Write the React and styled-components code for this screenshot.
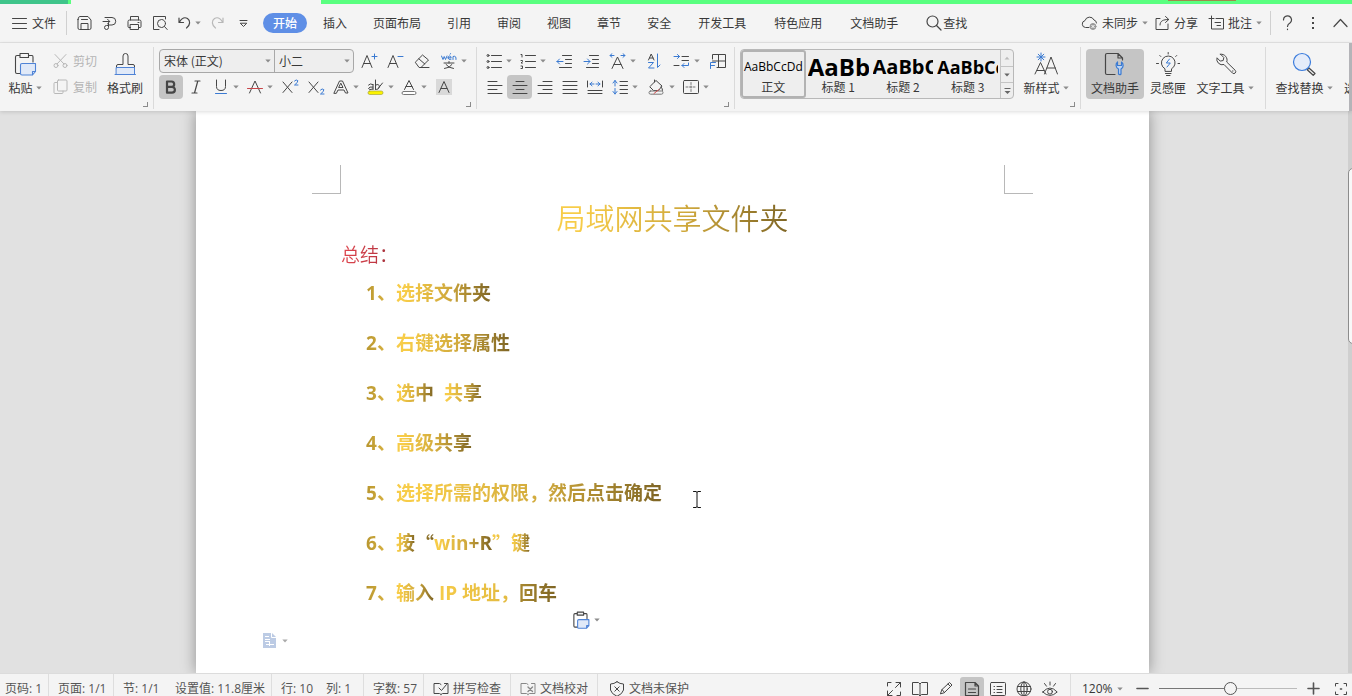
import React from "react";
import styled, { createGlobalStyle, css } from "styled-components";

const ui = '"Open Sans", "Noto Sans CJK SC", sans-serif';
const cjk = '"Noto Sans CJK SC", "Open Sans", sans-serif';

const GlobalStyle = createGlobalStyle`
  *, *::before, *::after { box-sizing: border-box; }
  body { margin: 0; background: #f4f4f4; color: #383838; font: 12px/20px ${cjk}; }
  button, select { font: inherit; color: inherit; border: 0; background: none; padding: 0; margin: 0; cursor: default; }
  svg { display: block; flex: none; }
`;

/* ---------- shell ---------- */

const Window = styled.div`
  display: flex;
  flex-direction: column;
  height: 100vh;
  overflow: hidden;
`;

const TabStrip = styled.div`
  display: flex;
  flex: none;
  height: 4px;
  background: #5aff80;
`;

const StripPart = styled.span`
  width: ${(p) => p.$w}px;
  background: ${(p) => p.$bg};
`;

const StripAlert = styled.span`
  width: 68px;
  height: 1px;
  margin-left: auto;
  margin-right: 116px;
  background: #a0884a;
`;

/* ---------- menu bar ---------- */

const MenuBar = styled.nav`
  display: flex;
  flex: none;
  align-items: center;
  height: 39px;
  padding: 0 4px 0 12px;
  border-bottom: 1px solid #e4e4e4;
  white-space: nowrap;
`;

const MenuButton = styled.button`
  display: flex;
  align-items: center;
  gap: ${(p) => p.$gap || 4}px;
  margin-left: ${(p) => p.$ml || 0}px;
  margin-right: ${(p) => p.$mr || 0}px;
`;

const MenuDivider = styled.span`
  width: 1px;
  height: 24px;
  margin: 0 ${(p) => p.$mr}px 0 ${(p) => p.$ml}px;
  background: #d0d0d0;
`;

const Tab = styled.button`
  height: 20px;
  padding: 0 ${(p) => (p.$wide ? 14 : 13)}px;
`;

const ActiveTab = styled.button`
  height: 20px;
  padding: 0 10px;
  margin-right: 3px;
  border-radius: 10px;
  background: #5f8fe6;
  color: #fff;
  font-weight: 500;
`;

const MenuEnd = styled.div`
  display: flex;
  align-items: center;
  margin-left: auto;
`;

/* ---------- ribbon ---------- */

const Ribbon = styled.div`
  position: relative;
  z-index: 1;
  display: flex;
  flex: none;
  height: 68px;
  background: #f4f4f4;
  box-shadow: 0 1px 4px rgba(0, 0, 0, 0.14);
  white-space: nowrap;
`;

const Group = styled.section`
  position: relative;
  display: flex;
  flex: ${(p) => (p.$grow ? "1 1 0" : "none")};
  min-width: 0;
  overflow: hidden;
  width: ${(p) => (p.$w ? p.$w + "px" : "auto")};
  padding: 6px 0 0 ${(p) => p.$pl || 0}px;

  &::after {
    content: "";
    display: ${(p) => (p.$grow ? "none" : "block")};
    position: absolute;
    right: 0;
    top: 4px;
    bottom: 2px;
    width: 1px;
    background: #dadada;
  }
`;

const Launcher = styled.button`
  position: absolute;
  right: 6px;
  bottom: 4px;
  width: 5px;
  height: 5px;
  border-right: 1px solid #8a8a8a;
  border-bottom: 1px solid #8a8a8a;
`;

const BigButton = styled.button`
  display: flex;
  flex: none;
  flex-direction: column;
  align-items: center;
  width: ${(p) => p.$w}px;
  height: 50px;
  padding-top: 3px;
  margin-right: ${(p) => p.$mr || 0}px;
  border-radius: 4px;
  background: ${(p) => (p.$on ? "#c5c5c5" : "transparent")};
`;

const BigLabel = styled.span`
  display: flex;
  align-items: center;
  gap: 3px;
  height: 20px;
  margin-top: 2px;
`;

const Rows = styled.div`
  display: flex;
  flex: none;
  flex-direction: column;
  gap: 2px;
  margin-right: ${(p) => p.$mr || 0}px;
`;

const Row = styled.div`
  display: flex;
  height: 24px;
`;

const SmallButton = styled.button`
  display: flex;
  align-items: center;
  gap: 5px;
  height: 24px;
  color: #b4b4b4;
`;

const Tool = styled.button`
  display: flex;
  align-items: center;
  justify-content: center;
  gap: 4px;
  width: ${(p) => p.$w}px;
  height: 24px;
  border-radius: 4px;
  background: ${(p) => (p.$on ? "#c5c5c5" : "transparent")};
`;

const Combos = styled.div`
  display: flex;
  height: 24px;
  margin-right: 2px;
  border: 1px solid #a8a8a8;
  border-radius: 4px;
  overflow: hidden;
  background: #eeeeee;
`;

const Combo = styled.label`
  display: grid;
  align-items: center;
  width: ${(p) => p.$w}px;

  & + & { border-left: 1px solid #a8a8a8; }
  & > * { grid-area: 1 / 1; }
  & > svg { justify-self: end; margin-right: 3px; pointer-events: none; }
`;

const ComboSelect = styled.select`
  appearance: none;
  width: 100%;
  height: 22px;
  padding: 0 14px 0 4px;
  outline: 0;
`;

/* ---------- style gallery ---------- */

const Gallery = styled.div`
  display: flex;
  width: 274px;
  height: 50px;
  margin-right: 4px;
  border: 1px solid #b8b8b8;
  border-radius: 4px;
  background: #eeeeee;
  overflow: hidden;
`;

const StyleCard = styled.button`
  flex: 1 1 0;
  min-width: 0;
  overflow: hidden;
  border: 2px solid ${(p) => (p.$on ? "#b2b2b2" : "transparent")};
  border-radius: 3px;
`;

const Preview = styled.span`
  display: flex;
  height: 25px;
  padding-top: 4px;
  align-items: center;
  justify-content: ${(p) => (p.$bold ? "flex-start" : "center")};
  overflow: hidden;
  color: #000;
  font-family: ${ui};
  font-size: ${(p) => p.$size}px;
  font-weight: ${(p) => (p.$bold ? 700 : 400)};
  line-height: 20px;
`;

const StyleName = styled.span`
  display: block;
  line-height: 20px;
`;

const Steps = styled.div`
  display: grid;
  grid-template-rows: repeat(3, 1fr);
  flex: none;
  width: 13px;
  border-left: 1px solid #c4c4c4;
`;

const Step = styled.button`
  display: flex;
  align-items: center;
  justify-content: center;
  & + & { border-top: 1px solid #c4c4c4; }
`;

const RibbonMore = styled.span`
  flex: none;
  width: 3px;
  background: #b4b4b8;
`;

/* ---------- document ---------- */

const Workspace = styled.main`
  display: flex;
  flex: 1 1 0;
  min-height: 0;
  background: #e1e1e1;
`;

const Canvas = styled.div`
  flex: 1;
  padding-right: 3px;
  overflow: hidden;
`;

const Page = styled.article`
  position: relative;
  width: 953px;
  max-width: 100%;
  min-height: 100%;
  margin: 0 auto;
  padding: 54px 116px 0;
  background: #fff;
  box-shadow: 0 0 14px rgba(0, 0, 0, 0.36);
`;

const Margins = styled.div`
  display: flex;
  justify-content: space-between;
`;

const Crop = styled.span`
  width: 29px;
  height: 29px;
  border-bottom: 1px solid #b8b8b8;
  ${(p) => (p.$right ? css`border-left: 1px solid #b8b8b8;` : css`border-right: 1px solid #b8b8b8;`)}
`;

const Body = styled.div`
  padding: 0 29px;
`;

const Title = styled.h1`
  margin: 0;
  text-align: center;
  font: 350 29px/46px ${cjk};
`;

const Summary = styled.h2`
  margin: 0;
  font: 350 19px/28px ${cjk};
`;

const Steplist = styled.ol`
  margin: 0;
  padding: 0 0 0 25px;
  list-style: none;
  font: 700 19px/50px ${ui};
`;

const Item = styled.li`
  display: flex;
  white-space: pre;
`;

const Ink = styled.span`
  background: ${(p) => p.$ink || "linear-gradient(90deg, #f7cc48 10%, #d0a93c 55%, #7d6424)"};
  -webkit-background-clip: text;
  background-clip: text;
  color: transparent;
  font-family: ${(p) => (p.$cjk ? cjk : "inherit")};
`;

const Num = styled(Ink)`
  width: 30px;
  white-space: nowrap;
`;

const Floating = styled.button`
  position: absolute;
  left: ${(p) => p.$x}px;
  top: ${(p) => p.$y}px;
  display: flex;
  align-items: center;
  gap: ${(p) => p.$gap || 4}px;
`;

const Rail = styled.div`
  flex: none;
  width: 4px;
  padding-top: 57px;
  background: #cfcfcf;
  overflow: hidden;
`;

const Thumb = styled.div`
  width: 12px;
  height: 176px;
  border: 1px solid #8c8c8c;
  border-radius: 5px;
  background: #f8f8f8;
`;

/* ---------- status bar ---------- */

const StatusBar = styled.footer`
  display: flex;
  flex: none;
  height: 23px;
  overflow: hidden;
  border-top: 1px solid #dcdcdc;
  color: #555;
  font-family: ${ui};
  white-space: nowrap;
`;

const Status = styled.button`
  display: flex;
  flex: none;
  align-items: center;
  gap: 4px;
  width: ${(p) => p.$w}px;
  height: 29px;
  padding-left: ${(p) => p.$pl || 9}px;
  border-right: 1px solid ${(p) => (p.$line ? "#dedede" : "transparent")};
`;

const StatusEnd = styled.div`
  display: flex;
  flex: none;
  align-items: center;
  height: 29px;
  margin-left: auto;
  padding-right: 4px;
`;

const View = styled.button`
  display: flex;
  flex: none;
  align-items: flex-start;
  justify-content: center;
  width: 24px;
  height: 24px;
  padding-top: 4px;
  margin-right: 2px;
  border-radius: 3px;
  background: ${(p) => (p.$on ? "#c5c5c5" : "transparent")};
`;

const Zoom = styled.button`
  display: flex;
  align-items: center;
  gap: 4px;
  width: 66px;
  height: 29px;
  margin-left: 6px;
  padding-left: 11px;
  border-left: 1px solid #dedede;
  color: #383838;
`;

const Slider = styled.input`
  appearance: none;
  width: 138px;
  height: 14px;
  margin: 0 10px;
  background: linear-gradient(#777, #777) left center / 50% 1px no-repeat,
    linear-gradient(#bbb, #bbb) right center / 50% 1px no-repeat;

  &::-webkit-slider-thumb {
    appearance: none;
    width: 13px;
    height: 13px;
    border: 1px solid #555;
    border-radius: 50%;
    background: #f4f4f4;
  }
`;

/* ---------- icons ---------- */

const K = "#464646";
const B = "#3a7ad2";

const Svg = ({ w = 16, h = 16, vb, c = K, sw = 1, children }) => (
  <svg width={w} height={h} viewBox={vb || `0 0 ${w} ${h}`} fill="none" stroke={c} strokeWidth={sw} strokeLinecap="round" strokeLinejoin="round" aria-hidden="true">
    {children}
  </svg>
);

const Caret = ({ c = "#8c8c8c", up }) => (
  <svg width="6" height="4" viewBox="0 0 6 4" aria-hidden="true">
    <path d={up ? "M.5 3.500 3 .8l2.500 2.700z" : "M.3.5h5.400L3 3.400z"} fill={c} />
  </svg>
);

const Burger = () => <Svg w={15}><path d="M.5 3.500h14M.5 8.500h14M.5 13.500h14" /></Svg>;
const Save = () => (
  <Svg w={15}><path d="M1 4.500V13q0 1.500 1.500 1.500h10Q14 14.500 14 13V5l-3-3.500H3Q1 1.500 1 4.500z" /><path d="M4 14.500V8.500h7v6M4.500 4.500h6" /></Svg>
);
const Export = () => (
  <Svg w={15}><path d="M3 2.500h7a3.700 3.700 0 0 1 0 7.500H6.500v2.500a2 2 0 1 1-2-2h2V8M1 6.500h6.500M5.500 4.200 7.800 6.500 5.500 8.800" /></Svg>
);
const Print = () => (
  <Svg w={15}><path d="M3.500 5V1.500h8V5M3.500 12.500H2Q1 12.500 1 11.500V6.500Q1 5 2.500 5h10Q14 5 14 6.500v5q0 1-1 1h-1.500M3.500 9.500h8v5h-8zM11 7.500h1" /></Svg>
);
const PrintView = () => (
  <Svg w={16}><path d="M7 14.500H1.500v-13h12V4" /><circle cx="9.500" cy="8.500" r="4" /><path d="m12.500 11.500 2.700 3" /></Svg>
);
const Undo = ({ c, flip }) => (
  <Svg w={13} c={c} sw={1.200}><g transform={flip ? "matrix(-1 0 0 1 13 0)" : undefined}><path d="M1 3v4.500h4.500M1.500 7C4 2.500 7 2 9.500 3.500c3 2 3 6.500-1 9.500" /></g></Svg>
);
const Customize = () => <Svg w={9} h={10}><path d="M1 2.500h7M1.500 5.500l3 3 3-3z" /></Svg>;
const Expand = () => (
  <svg width="7" height="8" viewBox="0 0 7 8" aria-hidden="true"><path d="M.5 1.500h6" stroke="#666" /><path d="M.5 4h6L3.500 7z" fill="#666" /></svg>
);
const Search = () => <Svg sw={1.200}><circle cx="6.500" cy="6.500" r="5.500" /><path d="m10.500 10.500 4.500 4.500" /></Svg>;
const Cloud = () => (
  <Svg w={17}><path d="M8 12.500H4.500A3.500 3.500 0 0 1 4 5.600 4.800 4.800 0 0 1 13 5q2.500.7 2.500 3" /><circle cx="12" cy="11.500" r="3" fill="#999" stroke="#999" /><path d="m10.800 10.300 2.400 2.400m0-2.400-2.400 2.400" stroke="#fff" /></Svg>
);
const Share = () => (
  <Svg w={15}><path d="M5 3.500H1v11h12V9M5 10C5 6 8 4.500 13.500 4.500M10.500 1.500l3.300 3-3.300 3" /></Svg>
);
const Comment = () => (
  <Svg w={16}><path d="M3.500 6v8h12V3.500H8M3.500 1v5M1 3.500h5M7 7.500h5.500M9 10.500h3.500" /></Svg>
);
const Help = () => <Svg w={11} sw={1.200}><path d="M1.500 5a4 4 0 1 1 6.700 2.800Q5.500 9.500 5.500 11.500M5.500 14v.6" /></Svg>;
const Dots = () => <svg width="4" height="16" viewBox="0 0 4 16" aria-hidden="true"><g fill={K}><rect x="1" y="2" width="2" height="2" /><rect x="1" y="7" width="2" height="2" /><rect x="1" y="12" width="2" height="2" /></g></svg>;
const Collapse = () => <Svg w={15} sw={1.200}><path d="m1 11.500 6.500-7 6.500 7" /></Svg>;

const Paste = ({ s = 24 }) => (
  <Svg w={s} h={s} vb="0 0 24 24" sw={24 / s * 1.100}>
    <path d="M8 21.500H4Q2.500 21.500 2.500 20V5Q2.500 3.500 4 3.500H19Q20 3.500 20 5v5" />
    <path d="M7 1.500h8.500v4H7z" fill="#f4f4f4" />
    <path d="M9 11.500h13.500v8l-3 3.500H9Q7.500 23 7.500 21.500v-8.500Q7.500 11.500 9 11.500zM19.500 23v-3.500h3" stroke="#4f83d6" fill="#e0e9f8" />
  </Svg>
);
const Cut = () => (
  <Svg w={15} c="#b8b8b8"><path d="m2 1.500 9 9.500M13 1.500 4 11" /><circle cx="3" cy="12.500" r="2" /><circle cx="12" cy="12.500" r="2" /></Svg>
);
const Copy = () => (
  <Svg w={15} c="#b8b8b8"><path d="M4.500 3.500H2Q1 3.500 1 4.500v9q0 1 1 1h7q1 0 1-1V12" /><rect x="4.500" y="1" width="9.500" height="11" rx="1" /></Svg>
);
const Brush = () => (
  <Svg w={24} h={24}>
    <path d="M3.500 16v-2q0-1.500 1.500-1.500h5V4a2.500 2.500 0 0 1 5 0v8.500h5q1.500 0 1.500 1.500v2" />
    <path d="M2 22.500h20.500M3.500 15.500h18v7h-18z" stroke="#4f83d6" fill="#e0e9f8" />
  </Svg>
);
const Grow = ({ minus }) => (
  <Svg w={17}><path d="M1 14.500 6 2.500l5 12M2.800 10.500h6.400" /><path d={minus ? "M11 3.500h5" : "M11 3.500h5M13.500 1v5"} stroke={B} /></Svg>
);
const Eraser = () => (
  <Svg><path d="m1.500 9 7-7 6 5-7.500 7.500H5.500zM4.800 5.800l6 5.200M7 14.500h8" /></Svg>
);
const Pinyin = () => (
  <Svg w={16}><g stroke={B}><path d="M.5 3 2 6.500 3.200 3.500 4.500 6.500 6 3M7 4.800h3.200Q10 3 8.500 3 7 3.200 7 5q.3 2 3 1.300M9 1.200l.8-.7M12 6.500V3.500q3.500-1.200 3 3" /></g><path d="M3 10h10M8 8.500V10M5 11.500Q7.500 15 12.500 15.500M11 11.500Q9 15 3.500 15.500" /></Svg>
);
const Bold = () => <Svg sw={2.200}><path d="M4 2.500h4.500a2.700 2.700 0 0 1 0 5.400H4zM4 7.900h5a2.900 2.900 0 0 1 0 5.800H4z" /></Svg>;
const Italic = () => <Svg sw={1.200}><path d="M7 2h5M4 14h5M9.800 2 6.500 14" /></Svg>;
const Underline = () => <Svg><path d="M3.500 1v6.500q0 4 4.500 4t4.500-4V1" /><path d="M2.500 14.500h11" stroke={B} /></Svg>;
const Strike = () => <Svg><path d="M2.500 14 8 2l5.500 12" /><path d="M.5 9.500h15" stroke="#c8464a" /></Svg>;
const Script = ({ sub }) => (
  <Svg w={17}><path d="m1 3 9 10.500M10 3 1 13.500" /><path d={sub ? "M12.500 11q1.800-2 3.300-.4.500 1.700-3.300 4.400H16" : "M12.500 2q1.800-2 3.300-.4.500 1.700-3.300 4.400H16"} stroke={B} /></Svg>
);
const Effect = () => <Svg><path d="M1 14 6.500 2h3L15 14h-2.500l-1.500-3H5l-1.500 3zM6 8.500h4L8 4.500z" /></Svg>;
const Highlight = () => (
  <Svg w={17}><path d="M6 5.500Q3 4 1.500 6M6 10.500v-5M6 8q-4-.5-4.500 1.500Q2 11.500 6 10M8.500 1v9.500M8.500 6q3-1.500 4 .8-.5 4.500-4 3.500M15.500 4l-4 5" /><rect x="1" y="12" width="15" height="3.500" rx="1.700" fill="#fbf200" stroke="#9a9a30" strokeWidth=".6" /></Svg>
);
const FontColor = () => <Svg><path d="M3.500 10.500 8 1.500l4.500 9M5 7.500h6" /><rect x="1" y="12.500" width="14" height="3" rx="1.500" stroke="#777" fill="#fff" /></Svg>;
const Shade = () => <Svg><rect x="0" y="0" width="16" height="16" fill="#d9d9d9" stroke="none" /><path d="M3 13.500 8 2.500l5 11M5 9.500h6" /></Svg>;

const Bullets = ({ num }) => (
  <Svg><path d="M5.500 2.500h10M5.500 8.500h10M5.500 14.500h10" />{num ? <path d="M1 1.500h1v2.500M1 7.500h1.500v1L1 10h1.500M1 13h1.500v2.500H1" /> : <g><circle cx="2" cy="2.500" r="1" /><circle cx="2" cy="8.500" r="1" /><circle cx="2" cy="14.500" r="1" /></g>}</Svg>
);
const Indent = ({ out }) => (
  <Svg><path d="M6.500 2.500h9M9.500 6.500h6M9.500 10.500h6M3.500 14.500h12" /><path d={out ? "M1 8.500h6M3.500 6 1 8.500 3.500 11" : "M1 8.500h6M4.500 6 7 8.500 4.500 11"} stroke={B} /></Svg>
);
const CharWidth = () => (
  <Svg w={17}><path d="M3 15.500 8.500 4 14 15.500M5 11.500h7" /><path d="M1 2.500h4M3 .7 1 2.500l2 1.800M16 2.500h-4M14 .7l2 1.800-2 1.800" stroke={B} /></Svg>
);
const Sort = () => (
  <Svg w={14}><path d="m1.500 7 2.700-6 2.800 6M2.500 5h3.500" /><path d="M1.500 9.500h5l-5 5.500h5.500M10.500 1v13.500l2.500-2.500" stroke={B} /></Svg>
);
const Tabs = () => (
  <Svg w={17}><path d="M9 3.500h6.500M9 7.500h6.500M1 12.500h5" /><path d="M1 3.500h5.500M4.500 1.500l2 2-2 2M15.500 10v2.500H9M11 10.500 9 12.500l2 2" stroke={B} /></Svg>
);
const LayoutGrid = () => (
  <Svg w={17}><path d="M3.500 6V1.500h13v13H8M9.500 1.500v13M3.500 8h13" /><path d="M1.500 15.500V9.500h5M1.500 12.500h4" stroke={B} /></Svg>
);
const Align = ({ d }) => <Svg><path d={d} /></Svg>;
const Distribute = () => <Svg><path d="M.5 2v6M15.500 2v6M1 11.500h14M1 14.500h14" /><path d="M3 5h4M5 3.200 3 5l2 1.800M13 5H9M11 3.200 13 5l-2 1.800" stroke={B} /></Svg>;
const Spacing = () => <Svg><path d="M8 2.500h7.500M8 6.500h7.500M8 10.500h7.500M8 14.500h7.500" /><path d="M3 1.500v5.500M3 9.500v5.500M1 4l2-2.500L5 4M1 12.500l2 2.500 2-2.500" stroke={B} /></Svg>;
const Bucket = () => <Svg w={17}><path d="M3 6.500 8 1.500l6 5.500-3.500 4.500h-5L2 8zM6.500 3V1M13 8q2 2 1.500 3.500" /><rect x="1" y="12" width="14" height="3.200" rx="1.600" stroke="#777" /><path d="m6 14.500 5-4" stroke="#d25050" /></Svg>;
const Borders = () => <Svg><rect x=".5" y="1.500" width="15" height="13" rx="1" /><path d="M8 3.500v9.500M3 8h10" strokeDasharray="2 1.500" stroke="#777" /></Svg>;

const NewStyle = () => (
  <Svg w={24} h={24}><path d="M1 22 6.500 10.500 12 22M3 18.500h7M10.500 22 17 5l6.500 17M13 16h8.500" /><path d="M7 1v8M3 5h8M4.200 2.200l5.600 5.600M9.800 2.200 4.200 7.800" stroke={B} /></Svg>
);
const DocHelper = () => (
  <Svg w={24} h={24} sw={1.200}><path d="M12 22.500H4q-1.500 0-1.500-1.500V3Q2.500 1.500 4 1.500h11l4.500 4.500v2M15 1.500V6h4.500" /><path d="M15.500 22v-5a4.200 4.200 0 0 1-1-7v3.500h4V10a4.200 4.200 0 0 1-.5 7v5q-1.200 1.300-2.500 0z" stroke={B} fill="#bcd4f4" /></Svg>
);
const Idea = () => (
  <Svg w={24} h={24}><path d="M9 19v-2.200a6.800 6.800 0 1 1 6.500 0V19zM9.500 21.500h5.500M10.500 23.500h3.500M12.200 2V.5M4.800 4.500l-1-1M19.700 4.500l1-1M2.500 11.500h-2M22 11.500h2" /><path d="m13.500 7-3.200 4h4l-3.300 4" stroke={B} /></Svg>
);
const Wrench = () => (
  <Svg w={24} h={24}><path d="M7.500 2.200 10.800 5.500l-.6 3-3 .6L4 5.800a5.500 5.500 0 0 0 7 6.700l8.500 8.600q1.500 1.200 2.700-.1 1.200-1.400 0-2.700l-8.500-8.300a5.800 5.800 0 0 0-6.200-7.800z" /><path d="M19.500 19h.5" /></Svg>
);
const FindBig = () => (
  <Svg w={24} h={24} sw={1.200}><path d="m17 16 6 5.500-1.800 1.800-6-5.500z" /><circle cx="10" cy="10" r="8.500" stroke="#3b7cdc" fill="#e4ecfa" /></Svg>
);
const DocTag = () => (
  <svg width="13" height="15" viewBox="0 0 13 15" aria-hidden="true"><path d="M0 0h9l4 4v11H0z" fill="#bccbe4" /><path d="M8.500 0v4.500H13M2 3.500h4M2 6.500h5M2 8.500h5M3 11.500h8M6.500 9v4" stroke="#fff" fill="none" /></svg>
);
const IBeam = () => <Svg w={8} h={17} c="#111"><path d="M.5.5h2.500l1 .8L5 .5h2.500M4 1.500v14M.5 16.500h2.500l1-.8 1 .8h2.500" /></Svg>;

const BookMark = ({ x, c }) => (
  <Svg w={16} h={14} c={c}><path d="M8 12.500 6.500 11.500H1v-10h5.500L8 2.500M8 12.500l1.500-1H15v-10h-3.500" />{x ? <path d="m8 5 4.500 4.500M12.500 5 8 9.500" strokeWidth="1.400" /> : <path d="m6 6 2.500 2.500 5-6" />}</Svg>
);
const Shield = () => <Svg><path d="M8 .8Q11 3 14.500 3v6Q13.500 13 8 15.300 2.500 13 1.500 9V3Q5 3 8 .8z" /><path d="m5.800 5.800 4.400 4.400M10.200 5.800l-4.400 4.400" /></Svg>;
const Full = () => <Svg><path d="M10 1.500h4.500V6M14.500 1.500 9.500 6.500M6 14.500H1.500V10M1.500 14.500l5-5M1.500 5V1.500H5M14.500 11v3.500H11" /></Svg>;
const Read = () => <Svg><path d="M8 3v12L6.500 13.500h-6v-12h6L8 3l1.500-1.500h6v12h-6L8 15" /></Svg>;
const Pen = () => <Svg><path d="M2.500 12.500 4 8.500 11.500 1.500 14 4l-7.500 7.500zM4 8.500l2.500 3M10 3l2.500 2.500M1 15.500h13.500" /></Svg>;
const DocView = () => <Svg sw={1.200}><path d="M1.500 1.500h9.500l3.500 3.500v9.500h-13zM11 1.500V5h3.500M4.500 8h7M4.500 11.500h7" /></Svg>;
const Outline = () => <Svg><rect x=".5" y="1.500" width="15" height="13" rx="1" /><path d="M4 5.500h.5M7 5.500h5M4 8.500h.5M7 8.500h5M4 11.500h.5M7 11.500h5" /></Svg>;
const Globe = () => <Svg><circle cx="8" cy="8" r="7" /><ellipse cx="8" cy="8" rx="3.200" ry="7" /><path d="M1.500 5.500h13M1.500 10.500h13M8 1v14" /></Svg>;
const Eye = () => <Svg><path d="M.8 11Q8 3 15.200 11 8 18 .8 11zM8 1v3M2.500 2.500l2 2.700M13.500 2.500l-2 2.700" /><circle cx="8" cy="10.700" r="2.400" /></Svg>;
const Focus = () => <Svg w={14} h={14}><path d="M1.500 4V1.500H4M10 1.500h2.500V4M12.500 10v2.500H10M4 12.500H1.500V10" /><path d="M6.500 7h1" strokeWidth="1.600" /></Svg>;
const Sign = ({ plus }) => <Svg w={13} h={13} sw={1.600} c="#555"><path d={plus ? "M1 6.500h11M6.500 1v11" : "M1 6.500h11"} /></Svg>;

/* ---------- data ---------- */

const tabs = [
  ["插入"], ["页面布局"], ["引用"], ["审阅"], ["视图"], ["章节"], ["安全"],
  ["开发工具", true], ["特色应用", true], ["文档助手", true],
];

const styles = [
  { name: "正文", sample: "AaBbCcDd", size: 12, on: true },
  { name: "标题 1", sample: "AaBb", size: 24, bold: true },
  { name: "标题 2", sample: "AaBbC", size: 20, bold: true },
  { name: "标题 3", sample: "AaBbCc", size: 18, bold: true },
];

const gold = "linear-gradient(90deg, #f7cc48, #e0b840)";
const mid = "linear-gradient(90deg, #b8962f, #e8c04a)";
const dark = "linear-gradient(90deg, #a98930, #7d6424)";
const red = "linear-gradient(90deg, #e0464e, #c03844 60%, #8c3038)";

const lines = [
  [{ t: "选择文件夹" }],
  [{ t: "右键选择属性" }],
  [{ t: "选中" }, { t: "  " }, { t: "共享" }],
  [{ t: "高级共享" }],
  [{ t: "选择所需的权限，然后点击确定" }],
  [{ t: "按" }, { t: "“", ink: dark, cjk: true }, { t: "win+R" }, { t: "”", ink: gold, cjk: true }, { t: "键" }],
  [{ t: "输入" }, { t: " IP 地址，", ink: gold }, { t: "回车", ink: dark }],
];

const ToolButton = ({ w, label, menu, on, children }) => (
  <Tool $w={w} $on={on} aria-label={label} aria-pressed={on}>
    {children}
    {menu && <Caret />}
  </Tool>
);

/* ---------- sections ---------- */

const TopMenu = () => (
  <MenuBar>
    <MenuButton $gap={5}><Burger />文件</MenuButton>
    <MenuDivider $ml={10} $mr={10} />
    <MenuButton $mr={10} aria-label="保存"><Save /></MenuButton>
    <MenuButton $mr={10} aria-label="输出"><Export /></MenuButton>
    <MenuButton $mr={10} aria-label="打印"><Print /></MenuButton>
    <MenuButton $mr={10} aria-label="打印预览"><PrintView /></MenuButton>
    <MenuButton $mr={10} aria-label="撤销"><Undo /><Caret /></MenuButton>
    <MenuButton $mr={15} aria-label="恢复"><Undo flip c="#b8b8b8" /></MenuButton>
    <MenuButton $mr={15} aria-label="自定义"><Customize /></MenuButton>
    <ActiveTab>开始</ActiveTab>
    {tabs.map(([t, wide]) => <Tab key={t} $wide={wide}>{t}</Tab>)}
    <MenuButton $gap={1} $ml={14}><Search />查找</MenuButton>
    <MenuEnd>
      <MenuButton $mr={7}><Cloud />未同步<Caret /></MenuButton>
      <MenuButton $mr={10}><Share />分享</MenuButton>
      <MenuButton><Comment />批注<Caret /></MenuButton>
      <MenuDivider $ml={8} $mr={11} />
      <MenuButton $mr={18} aria-label="帮助"><Help /></MenuButton>
      <MenuButton $mr={18} aria-label="更多"><Dots /></MenuButton>
      <MenuButton aria-label="收起"><Collapse /></MenuButton>
    </MenuEnd>
  </MenuBar>
);

const HomeRibbon = () => (
  <Ribbon>
    <Group $w={154} $pl={5}>
      <BigButton $w={40} $mr={8}><Paste /><BigLabel>粘贴<Caret /></BigLabel></BigButton>
      <Rows $mr={6}>
        <SmallButton><Cut />剪切</SmallButton>
        <SmallButton><Copy />复制</SmallButton>
      </Rows>
      <BigButton $w={44}><Brush /><BigLabel>格式刷</BigLabel></BigButton>
      <Launcher aria-label="剪贴板设置" />
    </Group>

    <Group $w={323} $pl={5}>
      <Rows>
        <Row>
          <Combos>
            <Combo $w={114}><ComboSelect aria-label="字体"><option>宋体 (正文)</option></ComboSelect><Caret /></Combo>
            <Combo $w={79}><ComboSelect aria-label="字号"><option>小二</option></ComboSelect><Caret /></Combo>
          </Combos>
          <ToolButton w={26} label="增大字号"><Grow /></ToolButton>
          <ToolButton w={26} label="减小字号"><Grow minus /></ToolButton>
          <ToolButton w={28} label="清除格式"><Eraser /></ToolButton>
          <ToolButton w={36} label="拼音指南" menu><Pinyin /></ToolButton>
        </Row>
        <Row>
          <ToolButton w={24} label="加粗" on><Bold /></ToolButton>
          <ToolButton w={26} label="倾斜"><Italic /></ToolButton>
          <ToolButton w={34} label="下划线" menu><Underline /></ToolButton>
          <ToolButton w={34} label="删除线" menu><Strike /></ToolButton>
          <ToolButton w={26} label="上标"><Script /></ToolButton>
          <ToolButton w={26} label="下标"><Script sub /></ToolButton>
          <ToolButton w={34} label="文字效果" menu><Effect /></ToolButton>
          <ToolButton w={34} label="突出显示" menu><Highlight /></ToolButton>
          <ToolButton w={34} label="字体颜色" menu><FontColor /></ToolButton>
          <ToolButton w={26} label="字符底纹"><Shade /></ToolButton>
        </Row>
      </Rows>
      <Launcher aria-label="字体设置" />
    </Group>

    <Group $w={258} $pl={5}>
      <Rows>
        <Row>
          <ToolButton w={34} label="项目符号" menu><Bullets /></ToolButton>
          <ToolButton w={34} label="编号" menu><Bullets num /></ToolButton>
          <ToolButton w={28} label="减少缩进"><Indent out /></ToolButton>
          <ToolButton w={26} label="增加缩进"><Indent /></ToolButton>
          <ToolButton w={36} label="中文版式" menu><CharWidth /></ToolButton>
          <ToolButton w={28} label="排序"><Sort /></ToolButton>
          <ToolButton w={36} label="制表位" menu><Tabs /></ToolButton>
          <ToolButton w={26} label="布局"><LayoutGrid /></ToolButton>
        </Row>
        <Row>
          <ToolButton w={25} label="左对齐"><Align d="M1 2.500h9M1 6.500h14M1 10.500h9M1 14.500h14" /></ToolButton>
          <ToolButton w={25} label="居中" on><Align d="M4 2.500h8M1 6.500h14M4 10.500h8M1 14.500h14" /></ToolButton>
          <ToolButton w={25} label="右对齐"><Align d="M6 2.500h9M1 6.500h14M6 10.500h9M1 14.500h14" /></ToolButton>
          <ToolButton w={25} label="两端对齐"><Align d="M1 2.500h14M1 6.500h14M1 10.500h14M1 14.500h14" /></ToolButton>
          <ToolButton w={25} label="分散对齐"><Distribute /></ToolButton>
          <ToolButton w={36} label="行距" menu><Spacing /></ToolButton>
          <ToolButton w={36} label="底纹颜色" menu><Bucket /></ToolButton>
          <ToolButton w={34} label="边框" menu><Borders /></ToolButton>
        </Row>
      </Rows>
      <Launcher aria-label="段落设置" />
    </Group>

    <Group $w={346} $pl={5}>
      <Gallery>
        {styles.map((s) => (
          <StyleCard key={s.name} $on={s.on}>
            <Preview $size={s.size} $bold={s.bold}>{s.sample}</Preview>
            <StyleName>{s.name}</StyleName>
          </StyleCard>
        ))}
        <Steps>
          <Step aria-label="上一行"><Caret up c="#bbb" /></Step>
          <Step aria-label="下一行"><Caret c="#666" /></Step>
          <Step aria-label="展开"><Expand /></Step>
        </Steps>
      </Gallery>
      <BigButton $w={56}><NewStyle /><BigLabel>新样式<Caret /></BigLabel></BigButton>
      <Launcher aria-label="样式设置" />
    </Group>

    <Group $w={185} $pl={5}>
      <BigButton $w={58} $mr={2} $on><DocHelper /><BigLabel>文档助手</BigLabel></BigButton>
      <BigButton $w={44} $mr={2}><Idea /><BigLabel>灵感匣</BigLabel></BigButton>
      <BigButton $w={66}><Wrench /><BigLabel>文字工具<Caret /></BigLabel></BigButton>
    </Group>

    <Group $grow $pl={5}>
      <BigButton $w={66} $mr={4}><FindBig /><BigLabel>查找替换<Caret /></BigLabel></BigButton>
      <BigButton $w={30}><Svg w={24} h={24} /><BigLabel>选择</BigLabel></BigButton>
    </Group>
    <RibbonMore />
  </Ribbon>
);

const Document = () => (
  <Workspace>
    <Canvas>
      <Page>
        <Margins><Crop /><Crop $right /></Margins>
        <Body>
          <Title><Ink>局域网共享文件夹</Ink></Title>
          <Summary><Ink $ink={red}>总结：</Ink></Summary>
          <Steplist>
            {lines.map((runs, i) => (
              <Item key={i}>
                <Num $ink={mid}>{i + 1}、</Num>
                {runs.map((r, j) => <Ink key={j} $ink={r.ink} $cjk={r.cjk}>{r.t}</Ink>)}
              </Item>
            ))}
          </Steplist>
        </Body>
        <Floating $x={376} $y={500} aria-label="粘贴选项"><Paste s={18} /><Caret /></Floating>
        <Floating $x={67} $y={522} $gap={6} aria-label="段落布局"><DocTag /><Caret c="#aaa" /></Floating>
        <Floating as="span" $x={497} $y={380}><IBeam /></Floating>
      </Page>
    </Canvas>
    <Rail><Thumb /></Rail>
  </Workspace>
);

const Footer = () => (
  <StatusBar>
    <Status $w={49} $pl={5} $line>页码: 1</Status>
    <Status $w={65} $line>页面: 1/1</Status>
    <Status $w={52}>节: 1/1</Status>
    <Status $w={106} $line>设置值: 11.8厘米</Status>
    <Status $w={45}>行: 10</Status>
    <Status $w={47} $line>列: 1</Status>
    <Status $w={60} $line>字数: 57</Status>
    <Status $w={87} $line><BookMark />拼写检查</Status>
    <Status $w={87} $line><BookMark x c="#888" />文档校对</Status>
    <Status $w={110} $pl={11}><Shield />文档未保护</Status>
    <StatusEnd>
      <View aria-label="全屏"><Full /></View>
      <View aria-label="阅读版式"><Read /></View>
      <View aria-label="写作模式"><Pen /></View>
      <View $on aria-label="页面视图"><DocView /></View>
      <View aria-label="大纲"><Outline /></View>
      <View aria-label="网页版式"><Globe /></View>
      <View aria-label="护眼模式"><Eye /></View>
      <Zoom>120%<Caret /></Zoom>
      <MenuButton aria-label="缩小"><Sign /></MenuButton>
      <Slider type="range" min="0" max="100" defaultValue="52" aria-label="缩放" />
      <MenuButton $mr={14} aria-label="放大"><Sign plus /></MenuButton>
      <MenuButton aria-label="适应窗口"><Focus /></MenuButton>
    </StatusEnd>
  </StatusBar>
);

export default function App() {
  return (
    <>
      <GlobalStyle />
      <Window>
        <TabStrip>
          <StripPart $w={68} $bg="#3fc48a" />
          <StripPart $w={3} $bg="#5aff80" />
          <StripPart $w={250} $bg="#f4f4f4" />
          <StripAlert />
        </TabStrip>
        <TopMenu />
        <HomeRibbon />
        <Document />
        <Footer />
      </Window>
    </>
  );
}
